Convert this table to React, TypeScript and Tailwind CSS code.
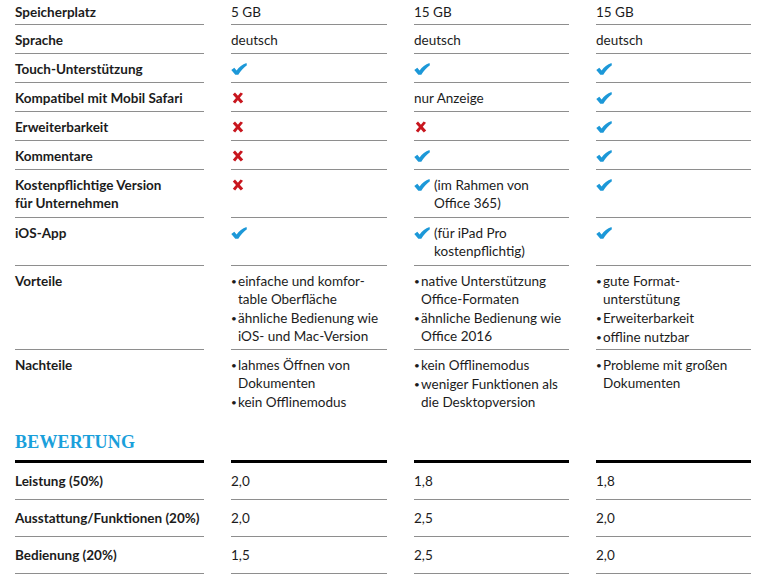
import type { ReactNode } from "react";

// ─── Marks ───────────────────────────────────────────────────────────────────

function Check() {
  return (
    <svg width="16" height="12" viewBox="0 0 16 12" className="shrink-0">
      <path
        d="M0.3 6.9 L3.3 4.7 L5.6 7.5 C8.1 4.3 11.3 1.6 15.5 0.1 L15.9 2.3 C12.6 4.7 9.6 8.1 7.3 11.8 L4.3 11.8 Z"
        fill="#1c98d8"
      />
    </svg>
  );
}

function Cross() {
  return (
    <svg width="12" height="12" viewBox="0 0 12 12" className="shrink-0">
      <path d="M0.8 2.4 L3 0.6 L11.2 9.4 L8.8 11.4 Z" fill="#c8161e" />
      <path d="M8.6 0.4 L11 1.8 L3.2 11.4 L0.8 9.8 Z" fill="#c8161e" />
    </svg>
  );
}

// ─── Cell helpers ────────────────────────────────────────────────────────────

type Val = ReactNode;

const check: Val = (
  <div className="flex h-[18px] items-center">
    <Check />
  </div>
);
const cross: Val = (
  <div className="flex h-[18px] items-center pl-[1px]">
    <Cross />
  </div>
);

function CheckNote({ lines }: { lines: string[] }) {
  return (
    <div className="flex gap-[4px]">
      <div className="flex h-[18px] items-center">
        <Check />
      </div>
      <div>
        {lines.map((l) => (
          <div key={l} className="whitespace-nowrap">
            {l}
          </div>
        ))}
      </div>
    </div>
  );
}

function Bullets({ items }: { items: string[][] }) {
  return (
    <div className="flex flex-col gap-[1px]">
      {items.map((lines, i) => (
        <div key={i} className="flex">
          <span className="w-[7px] shrink-0 text-[10px]">•</span>
          <div>
            {lines.map((l) => (
              <div key={l} className="whitespace-nowrap">
                {l}
              </div>
            ))}
          </div>
        </div>
      ))}
    </div>
  );
}

// ─── Data ────────────────────────────────────────────────────────────────────

interface Row {
  label: ReactNode;
  values: Val[];
  pt: string;
  pb: string;
  border: boolean;
}

const ROWS: Row[] = [
  { label: "Speicherplatz", values: ["5 GB", "15 GB", "15 GB"], pt: "pt-[3px]", pb: "pb-[3px]", border: true },
  { label: "Sprache", values: ["deutsch", "deutsch", "deutsch"], pt: "pt-[6px]", pb: "pb-[4px]", border: true },
  { label: "Touch-Unterstützung", values: [check, check, check], pt: "pt-[6px]", pb: "pb-[4px]", border: true },
  { label: "Kompatibel mit Mobil Safari", values: [cross, "nur Anzeige", check], pt: "pt-[6px]", pb: "pb-[4px]", border: true },
  { label: "Erweiterbarkeit", values: [cross, cross, check], pt: "pt-[6px]", pb: "pb-[4px]", border: true },
  { label: "Kommentare", values: [cross, check, check], pt: "pt-[6px]", pb: "pb-[4px]", border: true },
  {
    label: (
      <>
        Kostenpflichtige Version
        <br />
        für Unternehmen
      </>
    ),
    values: [cross, <CheckNote lines={["(im Rahmen von", "Office 365)"]} />, check],
    pt: "pt-[6px]",
    pb: "pb-[5px]",
    border: true,
  },
  {
    label: "iOS-App",
    values: [check, <CheckNote lines={["(für iPad Pro", "kostenpflichtig)"]} />, check],
    pt: "pt-[6px]",
    pb: "pb-[5px]",
    border: true,
  },
  {
    label: "Vorteile",
    values: [
      <Bullets items={[["einfache und komfor-", "table Oberfläche"], ["ähnliche Bedienung wie", "iOS- und Mac-Version"]]} />,
      <Bullets items={[["native Unterstützung", "Office-Formaten"], ["ähnliche Bedienung wie", "Office 2016"]]} />,
      <Bullets items={[["gute Format-", "unterstütung"], ["Erweiterbarkeit"], ["offline nutzbar"]]} />,
    ],
    pt: "pt-[6px]",
    pb: "pb-[3px]",
    border: true,
  },
  {
    label: "Nachteile",
    values: [
      <Bullets items={[["lahmes Öffnen von", "Dokumenten"], ["kein Offlinemodus"]]} />,
      <Bullets items={[["kein Offlinemodus"], ["weniger Funktionen als", "die Desktopversion"]]} />,
      <Bullets items={[["Probleme mit großen", "Dokumenten"]]} />,
    ],
    pt: "pt-[6px]",
    pb: "pb-[4px]",
    border: false,
  },
];

const RATINGS: { label: string; values: string[] }[] = [
  { label: "Leistung (50%)", values: ["2,0", "1,8", "1,8"] },
  { label: "Ausstattung/Funktionen (20%)", values: ["2,0", "2,5", "2,0"] },
  { label: "Bedienung (20%)", values: ["1,5", "2,5", "2,0"] },
];

const GRID = "grid grid-cols-[189px_156px_155px_155px] gap-x-[27px]";

// ─── Main component ──────────────────────────────────────────────────────────

export default function App() {
  return (
    <div
      className="h-[578px] w-[770px] overflow-hidden bg-white pl-[15px] text-[13.5px] leading-[18px] text-[#1c1c1c]"
      style={{ fontFamily: "Lato, 'Open Sans', sans-serif" }}
    >
      <div className={GRID}>
        {ROWS.map((row, r) => {
          const cls = `${row.pt} ${row.pb} ${row.border ? "border-b border-[#8e8e8e]" : ""}`;
          return [
            <div key={`l${r}`} className={`${cls} font-bold`}>
              {row.label}
            </div>,
            ...row.values.map((v, c) => (
              <div key={`v${r}-${c}`} className={cls}>
                {v}
              </div>
            )),
          ];
        })}
      </div>

      <div
        className="mt-[16px] mb-[7px] text-[18px] font-bold leading-[22px] tracking-[0.2px] text-[#1aa0db]"
        style={{ fontFamily: "'Liberation Serif', serif" }}
      >
        BEWERTUNG
      </div>

      <div className={GRID}>
        {RATINGS.map((row, r) => {
          const top = r === 0 ? "border-t-[3px] border-t-black" : "";
          const cls = `${top} border-b border-b-[#8e8e8e] pt-[9px] pb-[9px]`;
          return [
            <div key={`rl${r}`} className={`${cls} font-bold`}>
              {row.label}
            </div>,
            ...row.values.map((v, c) => (
              <div key={`rv${r}-${c}`} className={cls}>
                {v}
              </div>
            )),
          ];
        })}
      </div>
    </div>
  );
}
